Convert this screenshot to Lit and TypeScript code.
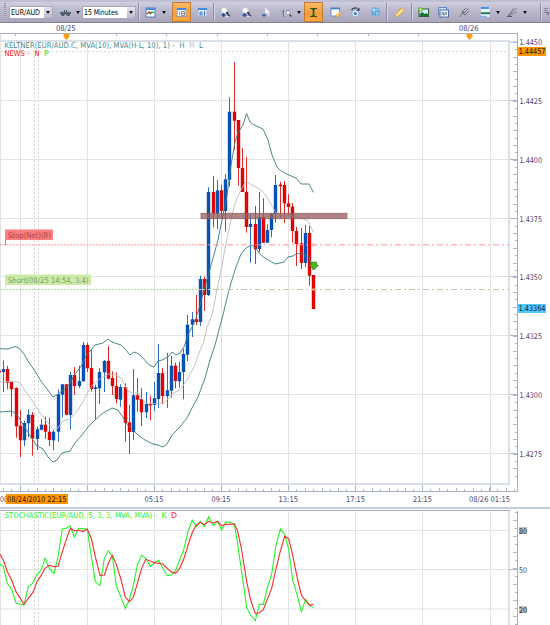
import { LitElement, html, svg, css, TemplateResult, SVGTemplateResult } from "lit";
import { customElement } from "lit/decorators.js";

type Bar = [string, number, number, number, number];

/* direction, wick top, body top, body bottom, wick bottom */
const BARS: Bar[] = [
  ["u", 360.3, 369, 372, 392], ["d", 365.7, 369, 382.7, 389.3], ["d", 382, 382, 389.3, 416.7],
  ["d", 387.3, 388, 426.3, 437.7], ["d", 410.3, 425.7, 440.3, 457], ["u", 421, 423, 440.3, 446],
  ["u", 409.3, 414.7, 423.3, 437.3], ["d", 412, 414.7, 438.7, 455.7], ["u", 426.7, 429.3, 439, 450],
  ["u", 419.3, 424.7, 429.7, 430.3], ["d", 416.7, 424.7, 431.7, 439], ["d", 417.3, 431.7, 440, 446],
  ["u", 430, 431.7, 440.3, 450], ["u", 389.3, 394.3, 431.7, 441.7], ["u", 384, 384.3, 394.7, 417.3],
  ["d", 384, 384.3, 414.7, 415], ["u", 372, 375, 415, 429.3], ["d", 367, 375, 386, 394.7],
  ["u", 365.7, 381, 386, 388], ["u", 342, 345, 381.3, 381.7], ["d", 342.7, 345, 368.3, 372],
  ["d", 350, 368, 389, 391.7], ["u", 384.7, 387.3, 389, 420], ["u", 368.3, 372, 388.3, 404],
  ["u", 360, 361, 372.3, 392], ["d", 345.7, 361, 378.7, 379.3], ["d", 371.3, 378, 386, 395],
  ["d", 372.7, 386, 399, 403.3], ["u", 384.3, 387, 399.7, 406.7], ["d", 383.3, 387, 423, 441.7],
  ["d", 405, 422.3, 432, 454], ["u", 369, 395.3, 432, 440], ["d", 378, 395.3, 399.7, 411.7],
  ["d", 388.3, 399, 412.3, 426], ["u", 392, 404, 412.3, 418], ["d", 395.7, 404, 405.5, 420.3],
  ["u", 382, 398.3, 405, 411], ["u", 344, 373, 399, 408], ["d", 368, 373, 396, 404],
  ["u", 353, 390.3, 396, 408], ["u", 356, 365.7, 390.7, 397.7], ["d", 362.7, 365.7, 381, 388.3],
  ["u", 361.7, 372, 381.3, 387.7], ["u", 349, 354, 372, 399.3], ["u", 315, 324.7, 354.7, 361],
  ["u", 312, 319.3, 324.7, 337], ["d", 295, 319.3, 322, 325], ["u", 275.7, 279, 322, 326],
  ["d", 276.7, 279, 295, 311], ["u", 187.3, 192, 295, 296], ["d", 176, 192, 213.7, 227.3],
  ["u", 180, 190.3, 213.7, 229.3], ["d", 185, 190.3, 211, 218.3], ["u", 174, 179.3, 211, 231.7],
  ["u", 97.3, 111.7, 179.7, 186.7], ["d", 62.3, 111.7, 120.7, 150], ["d", 120, 120, 168, 185.7],
  ["d", 148, 168, 192, 192], ["d", 157, 192, 227, 232.7], ["u", 215, 224, 227, 262.7],
  ["d", 206, 224, 249.3, 264], ["u", 192, 217, 249, 252], ["d", 198.3, 217, 242.7, 243],
  ["u", 224.3, 230, 242.7, 243], ["u", 213, 213.7, 230, 237.3], ["u", 175, 185, 214, 222.7],
  ["d", 182, 184.6, 186.2, 218], ["d", 181, 185, 203.3, 223], ["d", 194, 203.3, 207, 216],
  ["d", 203, 206.7, 231, 242.7], ["d", 227, 231, 244, 266], ["d", 228, 243.3, 263, 269],
  ["u", 225, 233, 263, 267.3], ["d", 226, 233, 275.7, 285.7], ["d", 275, 275, 309, 309.3],
];

const UPPER = "0,348.7 8,349 15,346.5 19,348 24,354 28,361 35,371 41,381 47,389 53,397 57,395 62,391 66,388 70,383 75,374 82,365 86,356 91,350 95,345 103,343 108,339 112,342 118,344 121,345 125,349 130,355 134,352 138,353.5 143,358 149,365 154,367 158,361 162,360 168,357 172,352 176,355 180,353 184,347 188,335 192,327 196,318 200,305 204,290 208,276 213,258 218,240 223,215 227,195 231,165 235,142 238,133 243,125 246.5,113.5 250,122 254,125 263,129 268,140 272,155 277,167 281,171 289,175 296,178 301,184 309,184 313.5,192.5";
const MIDDLE = "0,382 14,381 20,383 26,392 33,402 40,413 48,423 53,429 57,429 63,421 70,419 78,410 84,400 89,390 94,383 103,377 108,374 115,375 121,378 128,391 133,393 138,393 145,403 152,404 158,403 164,403 168,399 173,393 180,390 187,380 194,367 199,353 204,341 207,327 212,315 216,295 222,265 226,243 231,220 235,203 240,192 246,181 252,185 258,188 265,194 272,206 277,214 283,216 295,216 301,218 308,221 313.5,232.5";
const LOWER = "0,412 12,411 18,416 22,423 29,434 37,446 43,449 48,457 53,462 57,460 62,453 70,451 75,443 82,435 88,427 95,420 103,413 112,408 118,410 122,416 127,424 133,430 138,435 145,440 153,444 158,445 163,447 167,444 172,435 178,429 187,418 192,408 198,397 205,378 210,360 215,345 219,330 223,315 227,298 231,283 236,267 241,254 246,248 251,245 255,247 260,254 265,258 270,261 275,264 280,263 284,262 288,257 293,256 297,253.5 303,254 309,257 313,270";

/* stochastic samples in thirds of a pixel, measured from the panel origin */
const K_LINE = "0,267 10,275 22,325 36,345 48,384 60,388 72,390 85,335 98,325 111,298 123,286 135,250 148,280 162,296 174,245 187,162 200,159 211,153 223,186 236,160 262,162 274,245 286,320 300,331 313,250 325,228 337,243 349,332 362,365 376,400 388,375 400,332 412,270 425,241 437,250 451,274 463,264 476,256 488,278 502,302 514,300 526,288 539,255 551,225 564,170 577,136 589,155 601,139 613,154 626,125 640,152 653,139 665,165 678,140 690,142 703,147 712,200 725,290 740,397 752,420 766,437 778,388 790,388 803,335 815,298 828,210 841,162 854,178 866,222 878,315 891,358 904,410 917,373 929,390 940,398";
const D_LINE = "0,238 10,255 22,290 36,318 48,350 72,388 100,350 111,320 123,302 135,280 148,271 162,275 174,274 187,230 200,190 211,160 223,167 236,166 248,169 262,163 274,190 286,245 300,301 313,300 325,265 337,241 349,268 362,310 376,366 388,380 400,367 412,325 425,280 437,253 451,258 463,263 488,267 502,280 514,291 526,295 539,280 551,253 564,212 577,172 589,150 601,142 613,149 626,139 640,144 653,139 665,152 678,148 703,147 712,165 725,225 740,320 752,375 766,416 778,413 790,404 803,370 815,340 828,282 840,232 854,184 866,191 878,240 891,305 904,360 917,378 929,391 940,388";

const GRID_X = [20.5, 87.5, 154.5, 221.5, 288.5, 355.5, 422.5, 490.5];
const PRICES: [number, string][] = [
  [42, "1.4450"], [100.5, "1.4425"], [159.5, "1.4400"], [218.5, "1.4375"],
  [276.5, "1.4350"], [335.5, "1.4325"], [394.5, "1.4300"], [453.5, "1.4275"],
];
const TIMES: [number, string, number][] = [
  [144.5, "05:15", 19], [211.5, "09:15", 19], [278.5, "13:15", 19.5],
  [346, "17:15", 19], [413, "21:15", 19], [469, "08/26 01:15", 41],
];

const ICONS: Record<string, SVGTemplateResult> = {
  link: svg`<path d="M1 5h4v-2h1v2h1v-2h1v2h4v1l-2 3h-2l-1-2h-1l-1 2h-2l-2-3z" fill="#4d5566"/><path d="M3 5h2M8 5h2" stroke="#6a9cc4"/>`,
  chart: svg`<rect x="1" y="1" width="9" height="9" fill="#fff" stroke="#4a79bd"/><path d="M1 2h9" stroke="#4a8be0" stroke-width="2"/><path d="M2 7l2-2 2 2" fill="none" stroke="#e02020" stroke-width="1.3"/><path d="M5 7l2-2 2 1" fill="none" stroke="#159030" stroke-width="1.2"/>`,
  panelOn: svg`<rect x="1" y="1.5" width="9" height="8" fill="#f4f4f4" stroke="#8fa0bc"/><path d="M1 2h9" stroke="#4388df" stroke-width="2"/><path d="M3.5 4.5v4M5.5 4.5h3v4h-3zM5.5 6.5h3" fill="none" stroke="#778" stroke-width=".8"/>`,
  panel: svg`<rect x="1" y="1.5" width="9" height="8" fill="#e7edf8" stroke="#a0b2d6"/><path d="M1 2h9" stroke="#4388df" stroke-width="2"/><path d="M3 9v-4h2v4M3 7h2M7.5 4v5M6.5 6h2" fill="none" stroke="#3872c2" stroke-width=".9"/>`,
  zoomIn: svg`<circle cx="4.2" cy="3.4" r="3" fill="#f6f8fc" stroke="#c3c5d2" stroke-width=".8"/><path d="M6.5 5.5l3.2 3.7" stroke="#353a4c" stroke-width="1.4"/><path d="M8.5 5.6h-2.500" stroke="#353a4c"/><path d="M3.500 6v4M1.500 8h4" stroke="#214e9b" stroke-width="1.400"/><path d="M6 9.500h3" stroke="#e2e4ec"/>`,
  pointer: svg`<path d="M4 0v7l2-1 1 3 1.500-.6-1-2.400h2z" fill="#fbfbfe" stroke="#b8b9c8" stroke-width=".6"/><path d="M1 8.300h4M3 6.500v3.500" stroke="#3568ad" stroke-width="1.200"/>`,
  magnify: svg`<path d="M1.500 10v-7M0 5h3" stroke="#6b7080"/><rect x="2" y="3" width="8" height="6" fill="#d9dbe6" stroke="#868b9a" stroke-dasharray="1 1" stroke-width=".8"/><circle cx="6" cy="5.800" r="2.300" fill="#edf4fb" stroke="#666b79" stroke-width=".8"/><path d="M7.500 7.500l2 2" stroke="#6b3a24" stroke-width="1.400"/>`,
  candle: svg`<path d="M2 1.500h7M2 9.500h7" stroke="#4e4414"/><path d="M3.500 2l2 2.500 2-2.500M3.500 9l2-2 2 2z" fill="#278b35"/><path d="M5.500 2v7" stroke="#185f28" stroke-width="1.600"/>`,
  edit: svg`<rect x="1" y="1" width="8.500" height="8" fill="#f6f9fe" stroke="#6f94ce"/><path d="M1 1.500h9" stroke="#3d7fd5" stroke-width="1.600"/><path d="M5.500 9l4-4 1.500 1.500-3.500 3.500z" fill="#ffd25e" stroke="#e89b22" stroke-width=".7"/>`,
  eye: svg`<circle cx="5.300" cy="6.500" r="3.500" fill="#dfeaf7" stroke="#8ba4cb" stroke-width=".8"/><circle cx="5.300" cy="6.500" r="1.600" fill="#377ccf"/><path d="M1.500 3q3-3.500 6-1.500" fill="none" stroke="#303f61" stroke-width="1.200"/><path d="M6.500 3.500l3-3v3.500z" fill="#303f61"/>`,
  globe: svg`<circle cx="5.500" cy="5" r="4.700" fill="#6cb5e5"/><path d="M2 3q3-3 5 0l-2 2zM5 6l4-1-2 4z" fill="#b1e1f5"/><path d="M1 5h9M5.500 1v8M2 7.500h7" stroke="#5792c9" stroke-width=".5"/>`,
  ruler: svg`<path d="M1 7.500l7-7 2.500 2.500-7 7z" fill="#ffe29a" stroke="#d69326" stroke-width=".8"/><path d="M3 5.500l1.300 1.300M5 3.500l1.300 1.300M7 1.500l1.300 1.300" stroke="#a87325" stroke-width=".7"/>`,
  image: svg`<rect x="1" y="2" width="9.500" height="7.500" fill="#dceefe" stroke="#29623d"/><path d="M1.500 9V7l3-2 2 2 2-1 2 2v1z" fill="#16752f"/><circle cx="2.500" cy="2.500" r="2.200" fill="#57bb26"/><path d="M2.500 1v3M1 2.500h3" stroke="#d8ff9f" stroke-width=".7"/>`,
  windows: svg`<rect x=".5" y=".5" width="8" height="7" fill="#c9def8" stroke="#6486be"/><rect x="2" y="3" width="8.500" height="7" fill="#f3f7fc" stroke="#526ea5"/><path d="M4 8V5.500h1.500V8H7V5.500h1.500V8" fill="none" stroke="#405f99" stroke-width=".7"/>`,
  fork: svg`<path d="M0 10l5-5M3 5l3 3M3 5l4-4M4.500 6.500l5-5M6 8l4-4" fill="none" stroke="#626370" stroke-width=".9"/>`,
  levels: svg`<rect x="1" y="0" width="8.500" height="10" fill="#eaf4ff"/><path d="M1 1h8" stroke="#4b91e3" stroke-width="2"/><path d="M1 6.200h9" stroke="#287c51" stroke-width="2"/><path d="M1 9.500h6" stroke="#82b5eb" stroke-width="1.500"/>`,
  fan: svg`<path d="M1 9L10 1M1 9l6-8M1 9l9-4" fill="none" stroke="#686775" stroke-width=".7"/><path d="M0 9.500h5" stroke="#575963"/>`,
  more: svg`<path d="M3 1.500h4M3 3.500h4M3 5.500h3" stroke="#8483a0" stroke-width=".9"/><path d="M5 5h3v4z" fill="#74738f"/>`,
};

/* toolbar sequence: kind, cell width, icon name or caption */
const TOOLS: [string, number, string][] = [
  ["grip", 9, ""], ["combo", 44, "EUR/AUD"], ["gap", 5, ""], ["icon", 13, "link"], ["gap", 3, ""],
  ["arrow", 8, ""], ["combo", 54, "15 Minutes"], ["sep", 5, ""], ["gap", 3, ""], ["icon", 12, "chart"],
  ["arrow", 15, ""], ["gap", 1, ""], ["active", 19, "panelOn"], ["gap", 6, ""], ["icon", 11, "panel"],
  ["sep", 11, ""], ["icon", 13, "zoomIn"], ["gap", 8, ""], ["icon", 12, "zoomIn"], ["gap", 9, ""],
  ["icon", 10, "pointer"], ["gap", 10, ""], ["icon", 13, "magnify"], ["arrow", 9, ""], ["gap", 1, ""],
  ["active", 19, "candle"], ["gap", 6, ""], ["icon", 12, "edit"], ["gap", 8, ""], ["icon", 12, "eye"],
  ["gap", 8, ""], ["icon", 12, "globe"], ["sep", 10, ""], ["icon", 16, "ruler"], ["sep", 9, ""],
  ["icon", 15, "image"], ["gap", 5, ""], ["icon", 14, "windows"], ["gap", 8, ""], ["icon", 12, "fork"],
  ["gap", 8, ""], ["icon", 14, "levels"], ["arrow", 12, ""], ["gap", 2, ""], ["icon", 12, "fan"],
  ["arrow", 14, ""], ["gap", 5, ""], ["sep", 6, ""], ["icon", 7, "more"],
];

@customElement("chart-toolbar")
class ChartToolbar extends LitElement {
  static styles = css`
    :host { display: flex; align-items: center; height: 23px; overflow: hidden; position: relative;
      box-sizing: border-box; border-top: 2px solid #c0bfd2; border-bottom: 1px solid #858295;
      background: linear-gradient(#d0cfdf, #bbb9cc 40%, #a9a6bc); font: 7.8px "DejaVu Sans Condensed", "DejaVu Sans", sans-serif; color: #111; }
    .tab { position: absolute; left: 3px; top: -2px; width: 67px; height: 2px; background: #eee7bd; }
    .cell { flex: none; display: flex; align-items: center; justify-content: center; height: 20px; box-sizing: border-box; }
    .cell svg { display: block; flex: none; overflow: visible; }
    .grip i { width: 2px; height: 18px; background: repeating-linear-gradient(#9290a5 0 1px, #c5c3d4 1px 2px); }
    .sep i { width: 1px; height: 18px; background: #8d8a9f; box-shadow: 1px 0 #d5d3e1; }
    .active { background: linear-gradient(#f9ba66, #f19c38 60%, #ffa83d); border: 1px solid #c47a31; }
    .combo { height: 13px; background: #fff; border: 1px solid #aaa8ba; justify-content: space-between; padding-left: 1px; }
    .drop { width: 8px; height: 11px; background: linear-gradient(#e4e3ef, #bbb9cd); display: flex; align-items: center; justify-content: center; }
    .tri { width: 0; border: 2px solid transparent; border-top: 3px solid #111; border-bottom: 0; }
  `;
  private body(kind: string, name: string): TemplateResult | string {
    if (kind === "combo") {
      const w = name.length > 8 ? 36 : 31;
      return html`<svg width=${w} height="11"><text x="0" y="8.3" textLength=${w - 2} lengthAdjust="spacingAndGlyphs">${name}</text></svg><span class="drop"><span class="tri"></span></span>`;
    }
    if (kind === "arrow") return html`<span class="tri"></span>`;
    if (kind === "sep" || kind === "grip") return html`<i></i>`;
    if (kind === "gap") return "";
    return html`<svg width="11" height="11" viewBox="0 0 11 11">${ICONS[name]}</svg>`;
  }
  render() {
    return html`<span class="tab"></span>${TOOLS.map(([kind, w, name]) =>
      html`<span class="cell ${kind}" style="width:${w}px">${this.body(kind, name)}</span>`)}`;
  }
}

@customElement("price-chart")
class PriceChart extends LitElement {
  static styles = css`
    :host { display: block; height: 602px; background: #fff; }
    svg { display: block; }
    text { font: 7.8px "DejaVu Sans", sans-serif; }
    .axis { fill: #45447a; }
    .dark { fill: #1c1712; }
    .grid { stroke: #e3e3e3; }
    .dots { stroke: #d9d9d9; stroke-dasharray: 2 2; }
    .frame { stroke: #dae0e7; stroke-width: 2; }
    .rule { stroke: #a7b0c0; }
    .tick { stroke: #aeb7c4; }
    .u { fill: #0651b5; }
    .d { fill: #df0505; }
    .wu { stroke: #2a70c2; }
    .wd { stroke: #e02a2a; }
    .band { fill: none; stroke: #397c7a; stroke-width: .9; }
    .mean { fill: none; stroke: #bbb; stroke-width: .9; }
    .teal { fill: #478a87; }
  `;
  private label(x: number, y: number, text: string, width: number, cls = "axis") {
    return svg`<text class=${cls} x=${x} y=${y} textLength=${width} lengthAdjust="spacingAndGlyphs">${text}</text>`;
  }
  private line(cls: string, x1: number, y1: number, x2: number, y2: number) {
    return svg`<line class=${cls} x1=${x1} y1=${y1} x2=${x2} y2=${y2}/>`;
  }
  private grid() {
    return svg`
      ${GRID_X.map((x) => svg`${this.line("grid", x, 42, x, 484)}${this.line("grid", x, 511, x, 625)}`)}
      ${PRICES.slice(1).map(([y]) => this.line("grid", 0, y, 509, y))}
      ${[530.5, 569.5, 609].map((y) => this.line("grid", 0, y, 509, y))}
      ${[34.5, 38.5].map((x) => svg`${this.line("dots", x, 52, x, 484)}${this.line("dots", x, 512, x, 625)}`)}
      ${this.line("dots", 0, 51.5, 509, 51.5)}
      ${this.line("grid", 0.5, 34, 0.5, 484)}${this.line("grid", 0.5, 511, 0.5, 625)}`;
  }
  private axes() {
    const minor = Array.from({ length: 60 }, (_, i) => 42 + i * 7.35).filter((y) => y < 484);
    const hours = Array.from({ length: 31 }, (_, i) => 3.5 + i * 16.77).filter((x) => x < 517);
    const days = [15.5, 66.5, 116.5, 166.5, 217.5, 267.5, 317.5, 368.5, 418.5, 469.5];
    return svg`
      ${this.line("rule", 0, 33.5, 517.5, 33.5)}${this.line("rule", 517.5, 33, 517.5, 491)}
      ${this.line("frame", 0, 41, 510, 41)}${this.line("frame", 509, 41, 509, 485)}${this.line("frame", 0, 484, 510, 484)}
      ${this.line("rule", 0, 491.5, 518, 491.5)}
      ${days.map((x) => this.line("tick", x, 34, x, 36))}
      ${hours.map((x) => this.line("tick", Math.floor(x) + 0.5, 488, Math.floor(x) + 0.5, 491))}
      ${hours.map((x) => this.line("tick", Math.floor(x) + 8.5, 489, Math.floor(x) + 8.5, 491))}
      ${GRID_X.map((x) => this.line("tick", x, 485, x, 491))}
      ${minor.map((y, i) => this.line("tick", i % 2 ? 515 : 513, Math.round(y) + 0.5, 517, Math.round(y) + 0.5))}
      ${PRICES.map(([y, t]) => svg`${this.line("tick", 510, y, 517, y)}${this.label(519.5, y + 3, t, 22.5)}`)}
      <rect x="0" y="507" width="550" height="2" fill="#c1cee2"/>
      ${this.line("rule", 0, 510.5, 510, 510.5)}
      ${this.line("frame", 509, 511, 509, 625)}${this.line("rule", 517.5, 511, 517.5, 625)}
      ${Array.from({ length: 15 }, (_, i) => 512.5 + i * 8).map((y, i) => this.line("tick", i % 2 ? 513 : 515, y, 517, y))}
      ${this.line("tick", 509, 569.5, 517, 569.5)}
      <rect x="519" y="527" width="8" height="7" fill="#c4c4c4"/><rect x="519" y="606" width="8" height="7" fill="#c4c4c4"/>
      ${this.label(519, 533.5, "80", 8, "dark")}${this.label(519, 573, "50", 8)}${this.label(519, 612.5, "20", 8, "dark")}
      ${this.label(56, 30.5, "08/25", 19.5)}${this.label(459, 30.5, "08/26", 19.5)}
      ${[66.5, 469.5].map((x) => svg`<path d="M${x - 3} 34h6v2.500l-3 3.500-3-3.500z" fill="#ff9d12"/>`)}
      ${TIMES.map(([x, t, w]) => this.label(x, 502.2, t, w))}
      ${this.label(0, 502.2, "08", 8)}
      <rect x="6" y="494" width="62" height="10" fill="#ff9500"/>${this.label(7, 501.7, "08/24/2010 22:15", 59.5, "dark")}
      <rect x="518" y="47" width="28" height="9" fill="#ff9500"/>${this.label(518.7, 54.2, "1.44457", 26.7, "dark")}
      <rect x="518" y="304" width="28" height="9" fill="#52c8ff"/>${this.label(518.7, 311.2, "1.43364", 26.7, "dark")}`;
  }
  private bars() {
    return BARS.map(([dir, top, a, b, end], i) => {
      const x = Math.round(3.1 + i * 4.19) + 0.5;
      return svg`${this.line("w" + dir, x, top, x, end)}<rect class=${dir} x=${x - 1.7} y=${a} width="3.4" height=${b - a}/>`;
    });
  }
  private orders() {
    return svg`
      <line x1="0" y1="244.8" x2="199" y2="244.8" stroke="#ff9696" stroke-dasharray="2 1.2"/>
      <line x1="199" y1="244.8" x2="509" y2="244.8" stroke="#ff9696" stroke-dasharray="6 3 2 3"/>
      <line x1="0" y1="289.5" x2="199" y2="289.5" stroke="#add69a" stroke-dasharray="2 1.2"/>
      <line x1="199" y1="289.5" x2="509" y2="289.5" stroke="#b6cda9" stroke-dasharray="6 3 2 3"/>
      <path d="M5.500 240v5" stroke="#e36d6d"/><path d="M5.500 284v5" stroke="#d5e8c8"/>
      <rect x="5" y="229.5" width="48" height="10.5" fill="#fa7474" opacity=".92"/>
      <rect x="5" y="274.5" width="86" height="10.5" fill="#c7e99f" opacity=".92"/>
      <text x="8" y="237.5" fill="#b13f45" textLength="43" lengthAdjust="spacingAndGlyphs">Stop(Net)(B)</text>
      <text x="8" y="282.5" fill="#7e9b70" textLength="80.5" lengthAdjust="spacingAndGlyphs">Short(08/25 14:54, 3.4)</text>
      <circle cx="313.5" cy="244.8" r="1.2" fill="#fff" stroke="#ff7777" stroke-width=".7"/>
      <circle cx="313.5" cy="289.5" r="1.2" fill="none" stroke="#f7a08d" stroke-width=".7"/>`;
  }
  render() {
    return html`<svg width="550" height="602" viewBox="0 23 550 602">
      ${this.grid()}${this.axes()}
      ${this.line("wd", 0.5, 370.5, 0.5, 372.5)}
      ${this.bars()}
      ${svg`<polyline class="mean" points=${MIDDLE}/><polyline class="band" points=${UPPER}/><polyline class="band" points=${LOWER}/>
      <rect x="200.5" y="213" width="147" height="6" fill="#93605f" opacity=".77"/><path d="M200.500 213.300h147M200.500 218.700h147" stroke="#895858" stroke-width=".6" opacity=".6"/>`}
      ${this.orders()}
      ${svg`<path d="M311.500 262h5v3h2l-4.500 5-4.500-5h2z" fill="#4fb51c" stroke="#358b16" stroke-width=".7"/>
      <g transform="translate(0 475) scale(.33333)" fill="none" stroke-width="3.3"><polyline points=${K_LINE} stroke="#25f525"/><polyline points=${D_LINE} stroke="#f52a2a"/></g>`}
      ${this.label(4.5, 48.2, "KELTNER(EUR/AUD.C, MVA(10), MVA(H-L, 10), 1) -", 170, "teal")}
      ${this.label(179.5, 48.2, "H", 5, "teal")}${this.label(199, 48.2, "L", 4, "teal")}
      ${svg`<text x="189" y="48.2" fill="#c5c5c5" textLength="5.5" lengthAdjust="spacingAndGlyphs">M</text>
      <text x="4.5" y="56" fill="#f11" textLength="25" lengthAdjust="spacingAndGlyphs">NEWS -</text><text x="34.5" y="56" fill="#f11" textLength="5" lengthAdjust="spacingAndGlyphs">N</text><text x="44" y="56" fill="#1ee61e" textLength="4.5" lengthAdjust="spacingAndGlyphs">P</text>
      <text x="4.5" y="518.2" fill="#25f525" textLength="152.5" lengthAdjust="spacingAndGlyphs">STOCHASTIC(EUR/AUD, 5, 3, 3, MVA, MVA) -</text><text x="161.5" y="518.2" fill="#25f525">K</text><text x="171" y="518.2" fill="#f11">D</text>`}
    </svg>`;
  }
}

@customElement("app-root")
class AppRoot extends LitElement {
  static styles = css`
    :host { display: flex; flex-direction: column; width: 550px; height: 625px; overflow: hidden; background: #fff; }
  `;
  render() {
    return html`<chart-toolbar></chart-toolbar><price-chart></price-chart>`;
  }
}
